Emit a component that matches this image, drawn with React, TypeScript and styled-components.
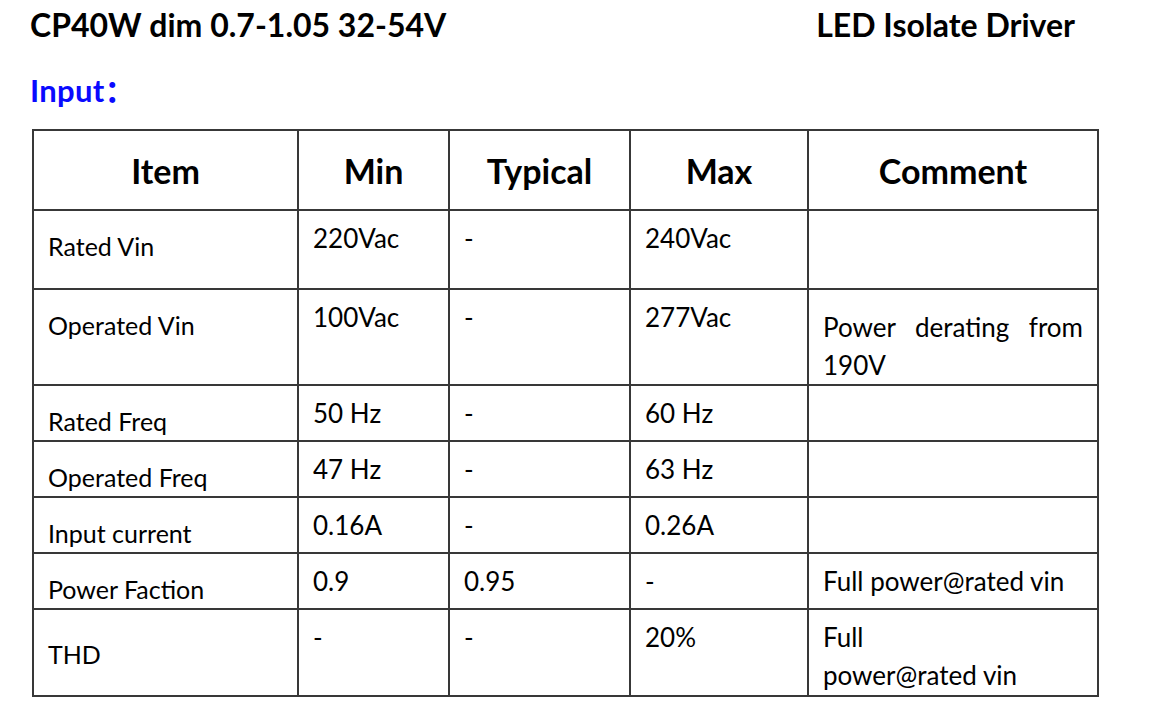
import styled, { createGlobalStyle } from 'styled-components';

const GlobalStyle = createGlobalStyle`
  body {
    margin: 0;
    background: #fff;
    color: #000;
    font-family: Lato, "Noto Sans CJK SC", sans-serif;
  }
`;

const Page = styled.div`
  padding: 5px 0 0 30px;
  width: 1067px;
`;

const TitleBar = styled.div`
  display: flex;
  justify-content: space-between;
  width: 1045px;
  font-size: 32px;
  font-weight: 700;
  line-height: 40px;
`;

const Section = styled.div`
  margin-top: 25px;
  color: #0a0aff;
  font-size: 31px;
  font-weight: 700;
  line-height: 40px;
  letter-spacing: 0.3px;
`;

const Table = styled.table`
  margin: 19px 0 0 2px;
  width: 1065px;
  table-layout: fixed;
  border-collapse: collapse;
  font-size: 26px;
`;

const Row = styled.tr<{ $h: number }>`
  height: ${(p) => p.$h}px;
`;

const Head = styled.th`
  border: 2px solid #383838;
  font-size: 34px;
  font-weight: 700;
  text-align: center;
  vertical-align: middle;
`;

const Cell = styled.td<{ $pad?: number; $item?: boolean }>`
  border: 2px solid #383838;
  vertical-align: top;
  padding: ${(p) => p.$pad ?? 8}px 14px 0 14px;
  font-size: ${(p) => (p.$item ? 25 : 26)}px;
  line-height: 38px;
  text-align: left;
`;

const JustLine = styled.span`
  display: block;
  text-align: justify;
  text-align-last: justify;
`;

interface RowData {
  h: number;
  item: string;
  itemPad?: number;
  min: string;
  typ: string;
  max: string;
  comment?: React.ReactNode;
  commentPad?: number;
}

const rows: RowData[] = [
  { h: 79, item: 'Rated Vin', min: '220Vac', typ: '-', max: '240Vac' },
  {
    h: 96,
    item: 'Operated Vin',
    min: '100Vac',
    typ: '-',
    max: '277Vac',
    comment: (
      <>
        <JustLine>Power derating from</JustLine>
        190V
      </>
    ),
    commentPad: 18,
  },
  { h: 55, item: 'Rated Freq', min: '50 Hz', typ: '-', max: '60 Hz' },
  { h: 56, item: 'Operated Freq', min: '47 Hz', typ: '-', max: '63 Hz' },
  { h: 56, item: 'Input current', min: '0.16A', typ: '-', max: '0.26A' },
  { h: 56, item: 'Power Faction', min: '0.9', typ: '0.95', max: '-', comment: 'Full power@rated vin' },
  {
    h: 87,
    item: 'THD',
    itemPad: 25,
    min: '-',
    typ: '-',
    max: '20%',
    comment: (
      <>
        Full
        <br />
        power@rated vin
      </>
    ),
  },
];

export default function App() {
  return (
    <Page>
      <GlobalStyle />
      <TitleBar>
        <span>CP40W dim 0.7-1.05 32-54V</span>
        <span>LED Isolate Driver</span>
      </TitleBar>
      <Section>Input：</Section>
      <Table>
        <colgroup>
          <col style={{ width: 265 }} />
          <col style={{ width: 151 }} />
          <col style={{ width: 181 }} />
          <col style={{ width: 178 }} />
          <col style={{ width: 290 }} />
        </colgroup>
        <thead>
          <Row $h={80}>
            <Head>Item</Head>
            <Head>Min</Head>
            <Head>Typical</Head>
            <Head>Max</Head>
            <Head>Comment</Head>
          </Row>
        </thead>
        <tbody>
          {rows.map((r) => (
            <Row key={r.item} $h={r.h}>
              <Cell $item $pad={r.itemPad ?? 16}>
                {r.item}
              </Cell>
              <Cell>{r.min}</Cell>
              <Cell>{r.typ}</Cell>
              <Cell>{r.max}</Cell>
              <Cell $pad={r.commentPad}>{r.comment}</Cell>
            </Row>
          ))}
        </tbody>
      </Table>
    </Page>
  );
}
